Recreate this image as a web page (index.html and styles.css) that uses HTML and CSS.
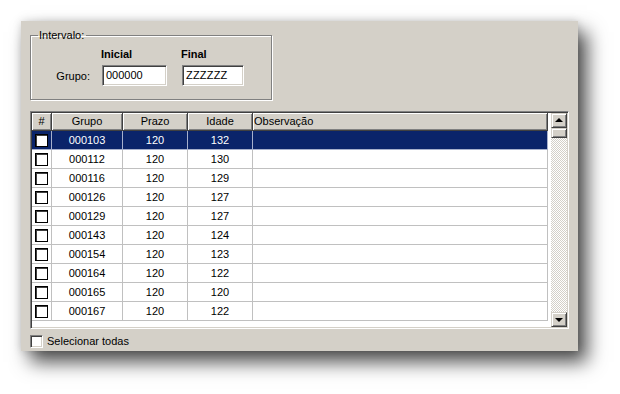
FILE: index.html
```html
<!DOCTYPE html>
<html>
<head>
<meta charset="utf-8">
<link rel="stylesheet" href="styles.css">
</head>
<body>
<div class="window">
  <fieldset class="group">
    <legend>Intervalo:</legend>
    <div class="range">
      <span></span><span class="head">Inicial</span><span class="head">Final</span>
      <span class="lbl">Grupo:</span>
      <div class="edit e1">000000</div>
      <div class="edit e2">ZZZZZZ</div>
    </div>
  </fieldset>

  <div class="grid">
    <div class="cols">
      <div class="row header">
        <div class="c">#</div><div class="c">Grupo</div><div class="c">Prazo</div><div class="c">Idade</div><div class="c left">Observação</div>
      </div>
      <div class="row sel"><div class="c"><span class="cb"></span></div><div class="c">000103</div><div class="c">120</div><div class="c">132</div><div class="c"></div></div>
      <div class="row"><div class="c"><span class="cb"></span></div><div class="c">000112</div><div class="c">120</div><div class="c">130</div><div class="c"></div></div>
      <div class="row"><div class="c"><span class="cb"></span></div><div class="c">000116</div><div class="c">120</div><div class="c">129</div><div class="c"></div></div>
      <div class="row"><div class="c"><span class="cb"></span></div><div class="c">000126</div><div class="c">120</div><div class="c">127</div><div class="c"></div></div>
      <div class="row"><div class="c"><span class="cb"></span></div><div class="c">000129</div><div class="c">120</div><div class="c">127</div><div class="c"></div></div>
      <div class="row"><div class="c"><span class="cb"></span></div><div class="c">000143</div><div class="c">120</div><div class="c">124</div><div class="c"></div></div>
      <div class="row"><div class="c"><span class="cb"></span></div><div class="c">000154</div><div class="c">120</div><div class="c">123</div><div class="c"></div></div>
      <div class="row"><div class="c"><span class="cb"></span></div><div class="c">000164</div><div class="c">120</div><div class="c">122</div><div class="c"></div></div>
      <div class="row"><div class="c"><span class="cb"></span></div><div class="c">000165</div><div class="c">120</div><div class="c">120</div><div class="c"></div></div>
      <div class="row"><div class="c"><span class="cb"></span></div><div class="c">000167</div><div class="c">120</div><div class="c">122</div><div class="c"></div></div>
    </div>
    <div class="scroll">
      <div class="sbtn"><span class="arrow up"></span></div>
      <div class="thumb"></div>
      <div class="track"></div>
      <div class="sbtn"><span class="arrow down"></span></div>
    </div>
  </div>

  <div class="selall"><span class="cb3d"></span><span>Selecionar todas</span></div>
</div>
</body>
</html>
```

FILE: styles.css
```css
html, body {
  margin: 0;
  padding: 0;
  background: #ffffff;
}

body {
  font-family: "Liberation Sans", Arial, sans-serif;
  font-size: 11px;
  color: #000;
  min-height: 394px;
}

.window {
  margin: 21px 0 0 21px;
  width: 557px;
  height: 330px;
  box-sizing: border-box;
  background: #d4d0c8;
  box-shadow: 9px 11px 18px rgba(0, 0, 0, 0.7), 0 0 8px rgba(0, 0, 0, 0.15);
  padding: 8px 0 0 9px;
  display: flex;
  flex-direction: column;
  align-items: flex-start;
}

.group {
  margin: 0;
  width: 242px;
  box-sizing: border-box;
  border: 1px solid #808080;
  box-shadow: inset 1px 1px 0 #fff, 1px 1px 0 #fff;
  padding: 6px 0 13px 0;
  min-width: 0;
}

.group legend {
  margin-left: 7px;
  padding: 0 2px 0 1px;
  line-height: 13px;
}

.range {
  display: grid;
  grid-template-columns: 71px 80px 62px;
  grid-auto-rows: auto;
  row-gap: 4px;
  align-items: center;
}

.head {
  font-weight: bold;
  line-height: 13px;
  margin-left: -1px;
}

.lbl {
  text-align: right;
  padding-right: 12px;
}

.edit {
  height: 21px;
  box-sizing: border-box;
  background: #fff;
  border: 1px solid;
  border-color: #808080 #fff #fff #808080;
  box-shadow: inset 1px 1px 0 #404040, inset -1px -1px 0 #d4d0c8;
  padding: 1px 0 0 3px;
  line-height: 17px;
}

.e1 { width: 65px; }
.e2 { width: 62px; letter-spacing: 0.2px; }

.grid {
  margin-top: 11px;
  width: 539px;
  height: 218px;
  box-sizing: border-box;
  border: 1px solid;
  border-color: #808080 #fff #fff #808080;
  box-shadow: inset 1px 1px 0 #404040, inset -1px -1px 0 #d4d0c8;
  padding: 1px;
  display: flex;
}

.cols {
  width: 519px;
  height: 100%;
  background: #fff;
  padding-right: 3px;
  box-sizing: border-box;
}

.row {
  display: grid;
  grid-template-columns: 20px 71px 65px 65px 295px;
  height: 19px;
}

.row .c {
  box-sizing: border-box;
  border-right: 1px solid #c0c0c0;
  border-bottom: 1px solid #c0c0c0;
  text-align: center;
  line-height: 18px;
  white-space: nowrap;
  overflow: hidden;
  display: flex;
  align-items: center;
  justify-content: center;
}

.row .c.left {
  justify-content: flex-start;
  padding-left: 1px;
}

.row.header {
  height: 18px;
}

.row.header .c {
  background: #d4d0c8;
  border-right: 1px solid #404040;
  border-bottom: 1px solid #404040;
  box-shadow: inset 1px 1px 0 #fff, inset -1px -1px 0 #808080;
  line-height: 17px;
}

.row.sel .c {
  background: #0a246a;
  color: #fff;
  border-right-color: #a6b0cc;
  border-bottom-color: #a6b0cc;
}

.cb {
  display: block;
  width: 13px;
  height: 13px;
  box-sizing: border-box;
  background: #fff;
  border: 1px solid #000;
  box-shadow: inset 1px 1px 0 #404040;
  margin-left: -1px;
}

.scroll {
  width: 16px;
  height: 100%;
  display: flex;
  flex-direction: column;
  background: #fff;
}

.sbtn, .thumb {
  flex: none;
  height: 15px;
  box-sizing: border-box;
  background: #d4d0c8;
  border: 1px solid;
  border-color: #d4d0c8 #404040 #404040 #d4d0c8;
  box-shadow: inset 1px 1px 0 #fff, inset -1px -1px 0 #808080;
  display: flex;
  align-items: center;
  justify-content: center;
}

.thumb {
  height: 10px;
}

.track {
  flex: 1;
  background: repeating-conic-gradient(#d4d0c8 0 25%, #ffffff 0 50%) 0 0 / 2px 2px;
}

.arrow {
  width: 0;
  height: 0;
  border-left: 4px solid transparent;
  border-right: 4px solid transparent;
}

.arrow.up {
  border-bottom: 4px solid #000;
  margin-top: -1px;
}

.arrow.down {
  border-top: 4px solid #000;
  margin-top: 1px;
}

.selall {
  margin-top: 6px;
  display: flex;
  align-items: center;
  gap: 4px;
  line-height: 13px;
}

.cb3d {
  width: 13px;
  height: 13px;
  box-sizing: border-box;
  background: #fff;
  border: 1px solid;
  border-color: #808080 #fff #fff #808080;
  box-shadow: inset 1px 1px 0 #404040, inset -1px -1px 0 #d4d0c8;
}
```
